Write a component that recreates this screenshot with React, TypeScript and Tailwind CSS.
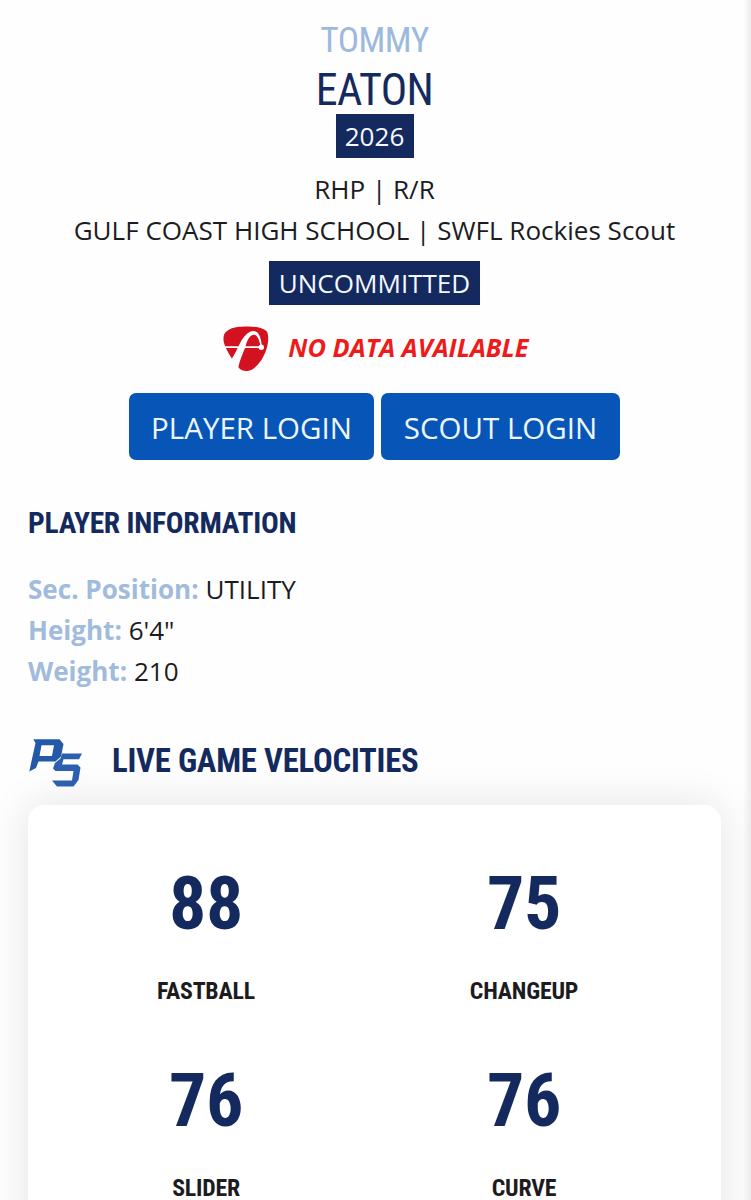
import type { ReactNode } from "react";

const condensed = "font-['Roboto_Condensed','Roboto',sans-serif] [font-stretch:75%]";

const details = [
  { label: "Sec. Position:", value: "UTILITY" },
  { label: "Height:", value: "6'4\"" },
  { label: "Weight:", value: "210" },
];

const velocities = [
  { pitch: "FASTBALL", mph: 88 },
  { pitch: "CHANGEUP", mph: 75 },
  { pitch: "SLIDER", mph: 76 },
  { pitch: "CURVE", mph: 76 },
];

function Tag({ children, className }: { children: ReactNode; className: string }) {
  return (
    <div className={`flex h-[44px] items-center justify-center bg-[#142a5e] text-[#f4f8ff] ${className}`}>
      {children}
    </div>
  );
}

function LoginButton({ children, className }: { children: ReactNode; className: string }) {
  return (
    <button
      className={`h-[67px] rounded-[7px] bg-[#0855b8] pt-[1px] text-[29.500px] whitespace-nowrap text-[#eef7ff] ${className}`}
    >
      {children}
    </button>
  );
}

function FlightScopeLogo() {
  return (
    <svg width="46" height="46" viewBox="0 0 46 46" className="shrink-0">
      <path
        d="M4 5C9 1 17 .5 25 .5c8 0 15 1.500 18.500 4.500C46 8 45.500 17 43.500 23 41 31 36 39 30 43c-5 3-11 2.500-13.500-.500C12 38 1 22 .5 14 .3 10 1 7 4 5Z"
        fill="#d3121f"
      />
      <path
        d="M1.500 20.300H15.500C19 12.500 24.500 5 30.500 5c5 0 7.500 6 8.300 14.500l-1.300.300C36 13 34 8.700 31 8.700c-4 0-7 5.600-8.500 11.600H37v1.800H22C19.500 28 17 34 15.500 40.500L15 46 4 38 8.500 33.500C11 29 13 26 14.600 22.100H1.500Z"
        fill="#fff"
      />
      <circle cx="38.300" cy="21.200" r="2.700" fill="#fff" />
    </svg>
  );
}

function PsLogo() {
  return (
    <svg width="54" height="48" viewBox="0 0 54 48" className="shrink-0">
      <path
        d="M5.300.3H31.500L35.500 5 33 17.500 27.500 22.500H10.500L8 29 1.300 32.500 3 24.500 7.500 4ZM13.500 6.200 11.500 17H24L26 6.200Z"
        fill="#2459a9"
        fillRule="evenodd"
      />
      <path
        d="M34 14.500H54L51 20.300H35.500L34 25.500H49.500L52.500 28.500 50.500 41 45.500 47.500H29L24 41.500H44L45.500 32H27.500L25 29.500 27 24 32.500 19.500Z"
        fill="#2c60ae"
      />
    </svg>
  );
}

export default function App() {
  return (
    <div className="h-[1200px] w-full overflow-hidden bg-[linear-gradient(to_left,#ececec,#fefefe_8px)] font-['Open_Sans',sans-serif] text-[26.050px] leading-[41px] text-[#1c1c1e]">
      <header className="flex w-[749px] flex-col items-center pt-[17px]">
        <h1 className={`flex flex-col items-center ${condensed}`}>
          <span className="h-[46px] text-[35.500px] leading-[46px] tracking-[-0.500px] text-[#9db9dc]">TOMMY</span>
          <span className="h-[51px] text-[44px] leading-[54px] tracking-[-0.600px] text-[#142a5e]">EATON</span>
        </h1>
        <Tag className="w-[78px]">2026</Tag>
        <p className="mt-[11px]">RHP | R/R</p>
        <p>GULF COAST HIGH SCHOOL | SWFL Rockies Scout</p>
        <Tag className="mt-[10px] w-[211px]">UNCOMMITTED</Tag>
        <div className="ml-[2px] mt-[21px] flex h-[46px] w-[306px] items-center justify-between">
          <FlightScopeLogo />
          <span className="pb-[3px] text-[25.400px] font-bold whitespace-nowrap text-[#ee1b1b] italic">
            NO DATA AVAILABLE
          </span>
        </div>
        <div className="mt-[21px] flex gap-[7px]">
          <LoginButton className="w-[245px]">PLAYER LOGIN</LoginButton>
          <LoginButton className="w-[239px]">SCOUT LOGIN</LoginButton>
        </div>
      </header>

      <section className="ml-[28px] pt-[43px]">
        <h2 className={`text-[29.500px] leading-[40px] font-bold tracking-[-0.250px] text-[#142a5e] ${condensed}`}>
          PLAYER INFORMATION
        </h2>
        <div className="mt-[26px]">
          {details.map((item) => (
            <p key={item.label}>
              <span className="font-bold text-[#a0bbdc]">{item.label}</span> {item.value}
            </p>
          ))}
        </div>
      </section>

      <section className="ml-[28px] w-[693px] pt-[46px]">
        <div className="flex h-[50px] items-center gap-[30px]">
          <PsLogo />
          <h2
            className={`pb-[4px] text-[32.800px] leading-[40px] font-bold tracking-[-0.250px] whitespace-nowrap text-[#142a5e] ${condensed}`}
          >
            LIVE GAME VELOCITIES
          </h2>
        </div>
        <div className="mt-[17px] grid h-[500px] grid-cols-2 content-start rounded-[16px] bg-white pt-[54px] pr-[38px] pl-[19px] text-center shadow-[0_0_44px_rgba(0,0,0,0.11)]">
          {velocities.map((item) => (
            <div key={item.pitch} className={`h-[197px] font-bold ${condensed}`}>
              <p className="text-[74px] leading-[90px] tracking-[-0.500px] text-[#142a5e]">{item.mph}</p>
              <p className="mt-[30px] text-[23.800px] leading-[24px] tracking-[-0.200px]">{item.pitch}</p>
            </div>
          ))}
        </div>
      </section>
    </div>
  );
}
